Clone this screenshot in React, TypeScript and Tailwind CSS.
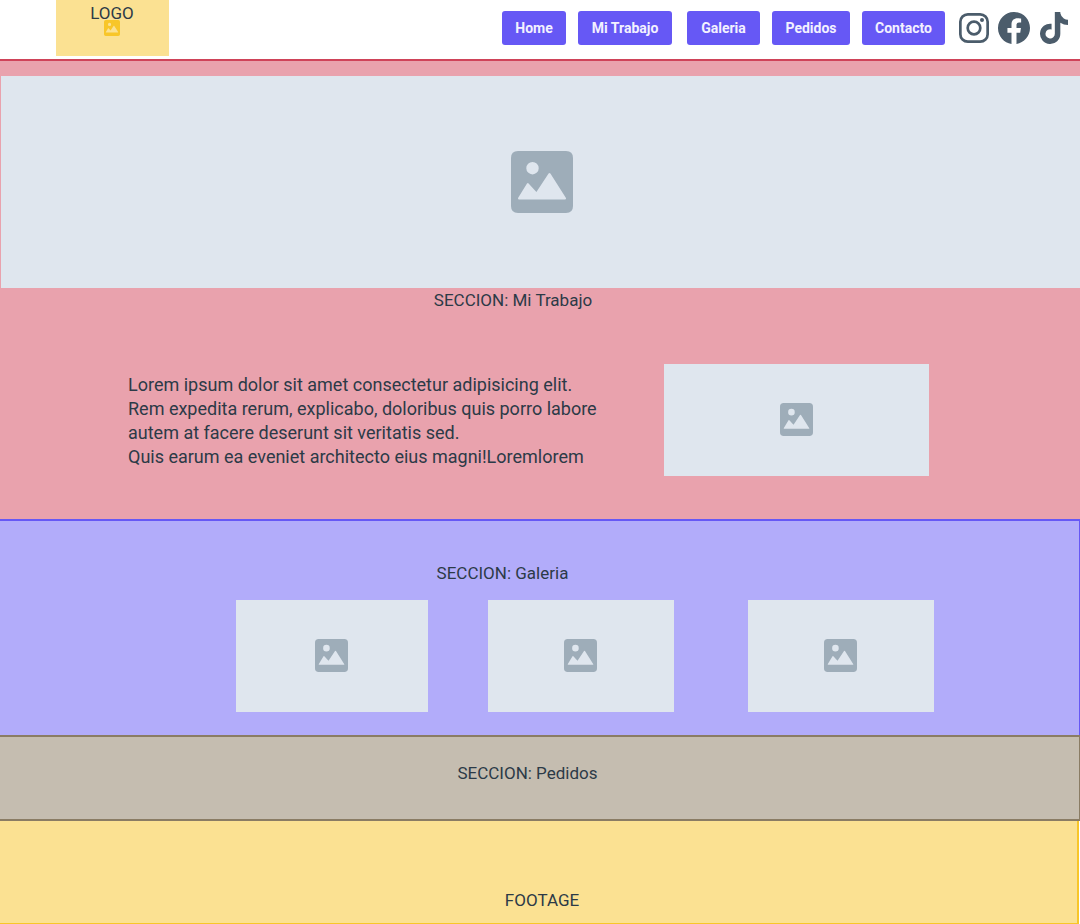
import { BsFacebook } from "react-icons/bs";
import { FaTiktok } from "react-icons/fa6";

const links = [
  { label: "Home", href: "#home", size: "w-16" },
  { label: "Mi Trabajo", href: "#trabajo", size: "w-[94px] mr-[3px]" },
  { label: "Galeria", href: "#galeria", size: "w-[73px]" },
  { label: "Pedidos", href: "#pedidos", size: "w-[78px]" },
  { label: "Contacto", href: "#contacto", size: "w-[83px]" },
];

function PictureIcon({ className }: { className: string }) {
  return (
    <svg viewBox="0 0 62 62" className={className} aria-hidden="true">
      <path
        fill="currentColor"
        fillRule="evenodd"
        d="M7 0H55Q62 0 62 7V55Q62 62 55 62H7Q0 62 0 55V7Q0 0 7 0ZM21.5 11a6.2 6.2 0 1 0 0 12.4a6.2 6.2 0 1 0 0-12.4ZM16 32.4L7.2 46.8Q6.4 48.6 8 48.6H54Q55.8 48.6 54.8 46.8L39.4 22.6Q38.5 21.3 37.6 22.6L25.4 41L17.6 32.4Q16.8 31.4 16 32.4Z"
      />
    </svg>
  );
}

function InstagramIcon() {
  return (
    <svg viewBox="0 0 30 30" className="size-[30px]" fill="none" stroke="currentColor" strokeWidth="2.7" aria-hidden="true">
      <rect x="1.35" y="1.35" width="27.3" height="27.3" rx="7.5" />
      <circle cx="15" cy="15" r="6.3" />
      <circle cx="23" cy="7" r="2" fill="currentColor" stroke="none" />
    </svg>
  );
}

function Placeholder({ className }: { className: string }) {
  return (
    <div className={`flex items-center justify-center bg-[#dfe6ee] pr-px pb-0.5 text-[#9eadb9] ${className}`}>
      <PictureIcon className="size-[33px]" />
    </div>
  );
}

export default function App() {
  return (
    <div className="flex min-h-screen flex-col bg-white font-['Roboto','Liberation_Sans',sans-serif] text-[17px] leading-6 text-[#2c3a47]">
      <header className="flex h-[59px] items-start justify-between pr-3 pl-14">
        <a href="#home" className="flex h-14 w-[113px] flex-col items-center bg-[#fbe192] pt-1.5 pr-px leading-[14px]">
          LOGO
          <PictureIcon className="size-4 text-[#f8c629]" />
        </a>
        <div className="flex h-14 items-center">
          <nav className="flex gap-3">
            {links.map((link) => (
              <a
                key={link.label}
                href={link.href}
                className={`flex h-[34px] items-center justify-center rounded-[3px] bg-[#6658f5] text-sm font-bold whitespace-nowrap text-[#f3f1ff] ${link.size}`}
              >
                {link.label}
              </a>
            ))}
          </nav>
          <div className="ml-3.5 flex items-center text-[#4b5c6b]">
            <a href="#instagram" aria-label="Instagram">
              <InstagramIcon />
            </a>
            <a href="#facebook" aria-label="Facebook" className="mr-2.5 ml-[9px]">
              <BsFacebook className="size-8" />
            </a>
            <a href="#tiktok" aria-label="TikTok">
              <FaTiktok className="h-8 w-7" />
            </a>
          </div>
        </div>
      </header>

      <main>
        <section id="trabajo" className="border-t-2 border-[#cf4359] bg-[#e9a2ad] pt-[15px] pb-[43px]">
          <div className="ml-px flex h-[212px] items-center justify-center bg-[#dfe6ee] pl-0.5 text-[#9eadb9]">
            <PictureIcon className="size-[62px]" />
          </div>
          <h2 className="pr-[54px] text-center">SECCION: Mi Trabajo</h2>
          <div className="mt-[52px] flex items-center justify-between pr-[151px] pl-32">
            <p className="pt-0.5 text-lg leading-6">
              Lorem ipsum dolor sit amet consectetur adipisicing elit.
              <br />
              Rem expedita rerum, explicabo, doloribus quis porro labore
              <br />
              autem at facere deserunt sit veritatis sed.
              <br />
              Quis earum ea eveniet architecto eius magni!Loremlorem
            </p>
            <Placeholder className="h-28 w-[265px] shrink-0" />
          </div>
        </section>

        <section id="galeria" className="border-t-2 border-r border-[#6658f5] bg-[#b2acfa] pt-10 pb-[23px]">
          <h2 className="pr-[74px] text-center">SECCION: Galeria</h2>
          <div className="mt-[15px] flex justify-between pr-[145px] pl-[236px]">
            <Placeholder className="h-28 w-48" />
            <Placeholder className="-ml-3.5 h-28 w-[186px]" />
            <Placeholder className="h-28 w-[186px]" />
          </div>
        </section>

        <section id="pedidos" className="border-y-2 border-r border-[#8a7c64] bg-[#c5bdb0] pt-6 pb-[34px]">
          <h2 className="pr-6 text-center">SECCION: Pedidos</h2>
        </section>
      </main>

      <footer id="contacto" className="mr-px flex-1 border-r-2 border-b border-[#f8c629] bg-[#fbe192] pt-[67px] pb-2 pl-[7px] text-center">
        FOOTAGE
      </footer>
    </div>
  );
}
